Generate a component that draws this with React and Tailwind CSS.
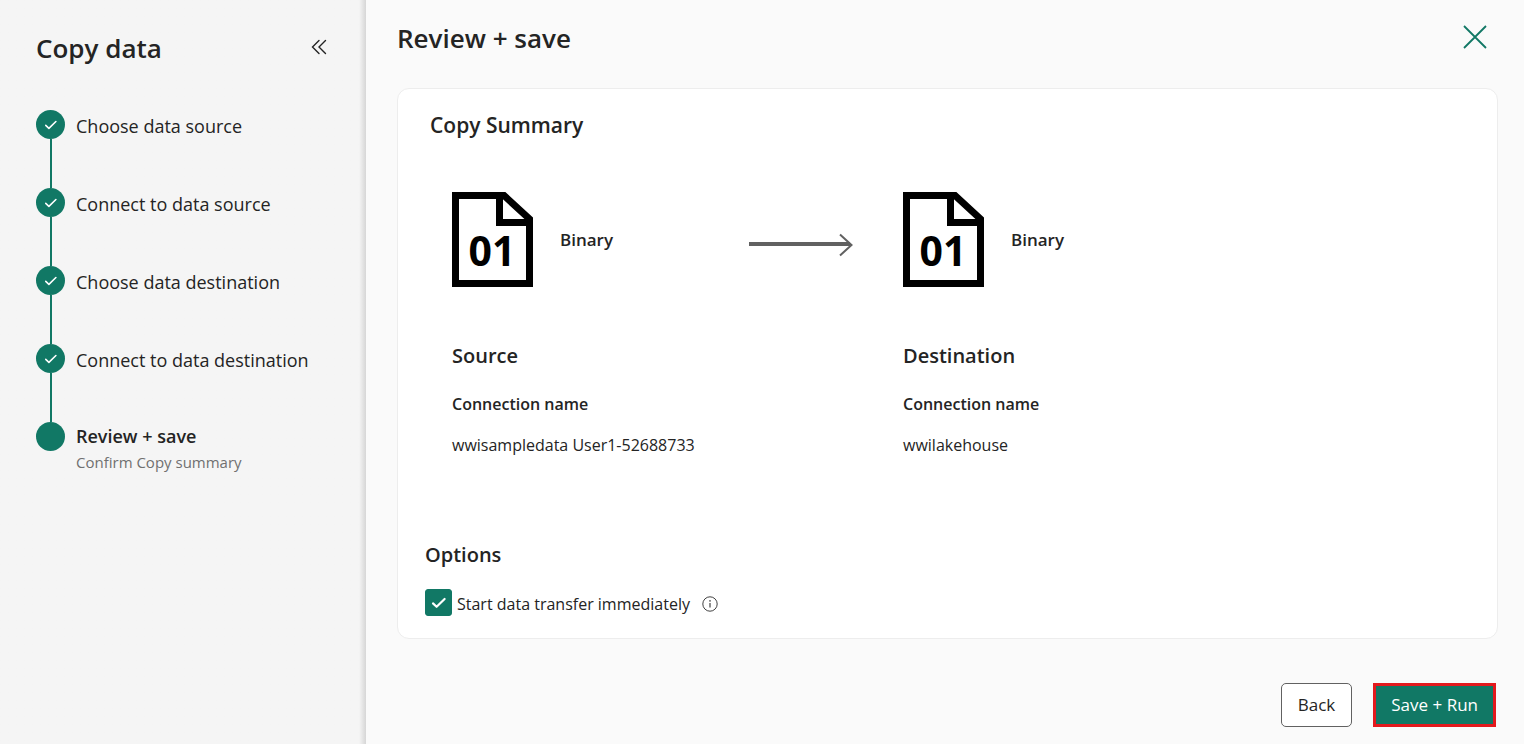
const steps = [
  { label: "Choose data source", done: true },
  { label: "Connect to data source", done: true },
  { label: "Choose data destination", done: true },
  { label: "Connect to data destination", done: true },
  { label: "Review + save", detail: "Confirm Copy summary", done: false },
];

function CheckMark({ className }) {
  return (
    <svg viewBox="0 0 16 16" className={className} fill="none" stroke="currentColor" aria-hidden="true">
      <path d="M2 8.4 5.6 11.8 13.6 4" strokeLinecap="round" strokeLinejoin="round" />
    </svg>
  );
}

function Step({ label, detail, done, last }) {
  return (
    <li className="flex gap-[11px]">
      <div className="flex w-[29px] shrink-0 flex-col items-center">
        <span className="flex size-[29px] items-center justify-center rounded-full bg-[#117865]">
          {done && <CheckMark className="size-[14px] stroke-[1.8] text-white" />}
        </span>
        {!last && <span className="h-[49px] w-[2px] bg-[#117865]" />}
      </div>
      <div className={last ? "" : "pt-[2px]"}>
        <p className={last ? "text-[18px] leading-7 font-semibold" : "text-[18px] leading-7"}>{label}</p>
        {detail && <p className="text-[15px] leading-6 text-[#707070]">{detail}</p>}
      </div>
    </li>
  );
}

function BinaryFile() {
  return (
    <svg viewBox="0 0 81 95" className="h-[95px] w-[81px] shrink-0" aria-hidden="true">
      <path d="M3.5 3.5H52L77.5 27V91.5H3.5Z" fill="none" stroke="#000" strokeWidth="7" />
      <path d="M47.5 4V30.5H78" fill="none" stroke="#000" strokeWidth="7" />
      <text x="40" y="74" textAnchor="middle" fill="#000" className="text-[41px] font-bold">01</text>
    </svg>
  );
}

function Endpoint({ title, name, arrow }) {
  return (
    <section>
      <div className="flex items-center">
        <BinaryFile />
        <span className="ml-[27px] text-[17px] leading-6 font-semibold">Binary</span>
        {arrow && (
          <svg viewBox="0 0 104 24" className="mt-[10px] mr-[50px] ml-auto h-6 w-[104px]" fill="none" stroke="#616161" aria-hidden="true">
            <path d="M0 11H101" strokeWidth="4" />
            <path d="M91 1.5 102.5 12 91 22.5" strokeWidth="2" />
          </svg>
        )}
      </div>
      <h3 className="mt-[55px] text-[20px] leading-7 font-semibold">{title}</h3>
      <dl>
        <dt className="mt-[22px] text-[16px] leading-6 font-semibold">Connection name</dt>
        <dd className="mt-[17px] text-[16px] leading-6">{name}</dd>
      </dl>
    </section>
  );
}

export default function App() {
  return (
    <div className="flex min-h-screen bg-[#fafafa] font-['Open_Sans','Noto_Sans',sans-serif] text-[#242424]">
      <aside className="w-[366px] shrink-0 bg-[#f5f5f5] bg-linear-to-l from-[#d6d6d6] to-[#f5f5f5] to-[7px] px-9 pt-[30px]">
        <div className="flex items-center justify-between">
          <h1 className="text-[26px] leading-9 font-semibold">Copy data</h1>
          <button type="button" aria-label="Collapse" className="flex h-9 w-[22px] items-start justify-center pt-[9px]">
            <svg viewBox="0 0 16 16" className="size-4" fill="none" stroke="#242424" strokeWidth="1.4" strokeLinecap="round" aria-hidden="true">
              <path d="M8 1.5 1.5 8 8 14.5M14.5 1.5 8 8 14.5 14.5" />
            </svg>
          </button>
        </div>
        <ol className="mt-11">
          {steps.map((step, i) => (
            <Step key={step.label} {...step} last={i === steps.length - 1} />
          ))}
        </ol>
      </aside>

      <main className="min-w-0 grow pr-[26px] pb-[17px] pl-[31px]">
        <header className="flex items-center justify-between pt-5 pr-[11px]">
          <h2 className="text-[26px] leading-9 font-semibold">Review + save</h2>
          <button type="button" aria-label="Close" className="flex h-[26px] w-6 items-start justify-center">
            <svg viewBox="0 0 24 24" className="size-6" fill="none" stroke="#117865" strokeWidth="1.8" aria-hidden="true">
              <path d="M1 1 23 23M23 1 1 23" />
            </svg>
          </button>
        </header>

        <div className="mt-8 rounded-xl border border-[#ededed] bg-white pb-[22px]">
          <h3 className="pt-[22px] pl-8 text-[21px] leading-7 font-semibold">Copy Summary</h3>
          <div className="mt-[53px] grid grid-cols-[44%_1fr] pr-5 pl-[54px]">
            <Endpoint title="Source" name="wwisampledata User1-52688733" arrow />
            <Endpoint title="Destination" name="wwilakehouse" />
          </div>
          <div className="mt-[84px] pl-[27px]">
            <h3 className="text-[20px] leading-7 font-semibold">Options</h3>
            <div className="mt-5 flex items-end">
              <span className="grid size-[27px] place-items-center">
                <input id="start" type="checkbox" defaultChecked className="peer col-start-1 row-start-1 size-[27px] appearance-none rounded-[3px] border border-[#117865] checked:bg-[#117865]" />
                <CheckMark className="pointer-events-none invisible col-start-1 row-start-1 size-4 stroke-[2.2] text-white peer-checked:visible" />
              </span>
              <label htmlFor="start" className="ml-[5px] text-[16px] leading-6">Start data transfer immediately</label>
              <svg viewBox="0 0 16 16" className="mb-1 ml-3 size-4" fill="none" stroke="#424242" aria-hidden="true">
                <circle cx="8" cy="8" r="7.2" />
                <path d="M8 7V11.5" strokeWidth="1.2" />
                <circle cx="8" cy="4.9" r="0.8" fill="#424242" stroke="none" />
              </svg>
            </div>
          </div>
        </div>

        <div className="mt-11 flex justify-end gap-[21px] pr-[2px]">
          <button type="button" className="h-11 rounded-[5px] border border-[#616161] bg-white px-4 text-[17px] leading-6">Back</button>
          <button type="button" className="h-11 border-3 border-[#e3191d] bg-[#117865] px-[15px] text-[17px] leading-6 text-white">Save + Run</button>
        </div>
      </main>
    </div>
  );
}
